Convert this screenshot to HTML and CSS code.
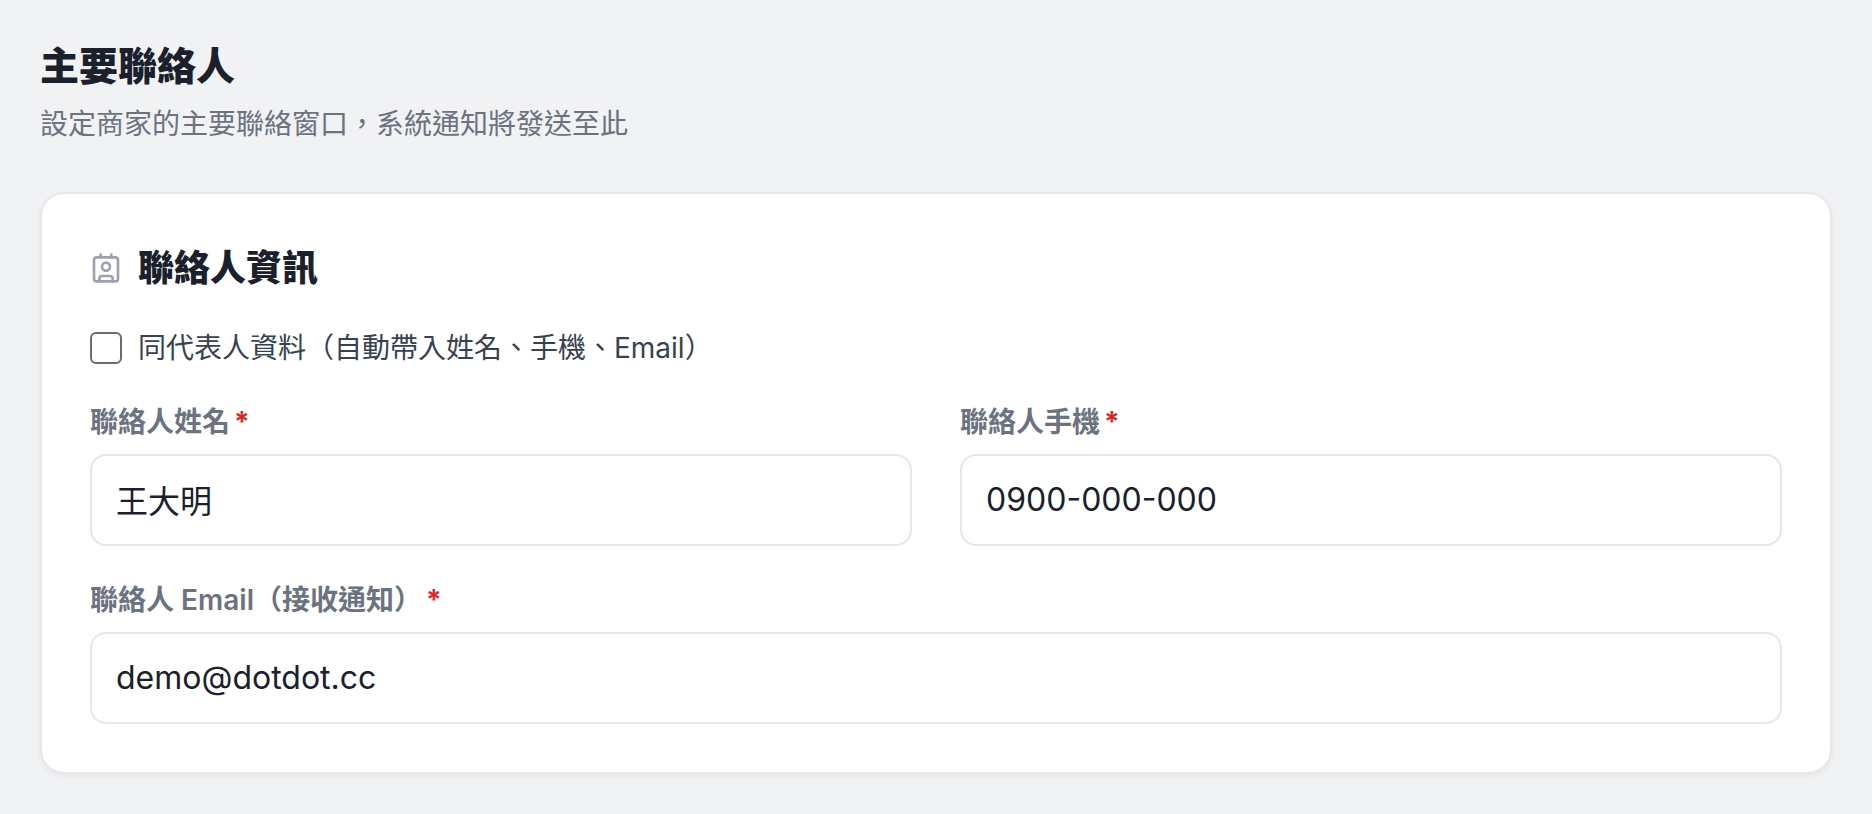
FILE: index.html
```html
<!DOCTYPE html>
<html lang="zh-Hant">
<head>
    <meta charset="UTF-8">
    <meta name="viewport" content="width=device-width, initial-scale=1.0">
    <title>主要聯絡人</title>
    <link rel="stylesheet" href="styles.css">
</head>
<body>
    <div class="page">
        <h1 class="page-title">主要聯絡人</h1>
        <p class="page-desc">設定商家的主要聯絡窗口，系統通知將發送至此</p>

        <div class="card">
            <div class="card-header">
                <svg class="card-icon" viewBox="0 0 24 24" fill="none" stroke="currentColor" stroke-width="2" stroke-linecap="round" stroke-linejoin="round">
                    <path d="M16 2v2"></path>
                    <path d="M7 22v-2a2 2 0 0 1 2-2h6a2 2 0 0 1 2 2v2"></path>
                    <path d="M8 2v2"></path>
                    <circle cx="12" cy="11" r="3"></circle>
                    <rect x="3" y="4" width="18" height="18" rx="2"></rect>
                </svg>
                <h2 class="card-title">聯絡人資訊</h2>
            </div>

            <label class="check-row">
                <input type="checkbox" class="check-box">
                <span>同代表人資料（自動帶入姓名、手機、Email）</span>
            </label>

            <div class="field-row">
                <div class="field">
                    <label class="field-label">聯絡人姓名<span class="required">*</span></label>
                    <input type="text" class="field-input" value="王大明">
                </div>
                <div class="field">
                    <label class="field-label">聯絡人手機<span class="required">*</span></label>
                    <input type="text" class="field-input" value="0900-000-000">
                </div>
            </div>

            <div class="field">
                <label class="field-label">聯絡人 Email（接收通知）<span class="required">*</span></label>
                <input type="text" class="field-input" value="demo@dotdot.cc">
            </div>
        </div>
    </div>
</body>
</html>
```

FILE: styles.css
```css
body {
    margin: 0;
    background-color: #f1f2f4;
    color: #1a202c;
    font-family: Inter, "Noto Sans CJK TC", sans-serif;
}

.page {
    padding: 42px 40px;
}

.page-title {
    margin: 0;
    font-size: 39px;
    line-height: 48px;
    font-weight: 900;
}

.page-desc {
    margin: 14px 0 0;
    font-size: 28px;
    line-height: 40px;
    color: #6b7280;
}

.card {
    margin-top: 48px;
    padding: 52px 48px 48px;
    background-color: #fff;
    border: 2px solid #e5e7eb;
    border-radius: 24px;
    box-shadow: 0 2px 4px rgba(0, 0, 0, 0.05);
}

.card-header {
    display: flex;
    align-items: center;
    gap: 16px;
    height: 44px;
}

.card-icon {
    width: 32px;
    height: 32px;
    color: #9ca3af;
}

.card-title {
    margin: 0;
    font-size: 36px;
    line-height: 44px;
    font-weight: 900;
}

.check-row {
    display: flex;
    align-items: center;
    gap: 16px;
    margin-top: 38px;
    font-size: 28px;
    line-height: 40px;
    color: #374151;
}

.check-box {
    appearance: none;
    flex: none;
    width: 32px;
    height: 32px;
    margin: 0;
    background-color: #fff;
    border: 2px solid #6b6b6b;
    border-radius: 6px;
}

.field-row {
    display: grid;
    grid-template-columns: 1fr 1fr;
    gap: 48px;
    margin-top: 36px;
    margin-bottom: 36px;
}

.field-label {
    display: block;
    margin-bottom: 14px;
    font-size: 28px;
    line-height: 36px;
    font-weight: 600;
    color: #6b7280;
}

.required {
    margin-left: 4px;
    font-weight: 700;
    color: #dc2626;
}

.field-input {
    display: block;
    box-sizing: border-box;
    width: 100%;
    height: 92px;
    padding: 0 24px 2px;
    background-color: #fff;
    border: 2px solid #e5e7eb;
    border-radius: 16px;
    font-family: inherit;
    font-size: 32px;
    color: #1a202c;
}
```
